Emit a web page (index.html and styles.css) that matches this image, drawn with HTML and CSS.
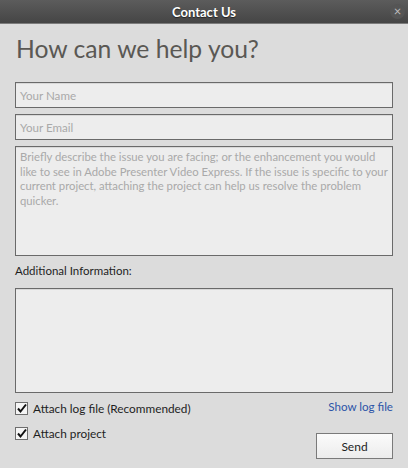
FILE: index.html
```html
<!DOCTYPE html>
<html>
<head>
<meta charset="utf-8">
<link rel="stylesheet" href="styles.css">
</head>
<body>
<div class="dialog">
  <div class="titlebar">
    <span class="title">Contact Us</span>
    <span class="close">×</span>
  </div>
  <div class="content">
    <h1 class="heading">How can we help you?</h1>
    <div class="field field-line"><span class="ph">Your Name</span></div>
    <div class="field field-line"><span class="ph">Your Email</span></div>
    <div class="field field-area"><span class="ph">Briefly describe the issue you are facing; or the enhancement you would like to see in Adobe Presenter Video Express. If the issue is specific to your current project, attaching the project can help us resolve the problem quicker.</span></div>
    <div class="label">Additional Information:</div>
    <div class="field field-area2"></div>
    <div class="bottom">
      <div class="checks">
        <label class="check">
          <svg class="box" width="13" height="13" viewBox="0 0 13 13"><rect x="0.5" y="0.5" width="12" height="12" fill="#f5f5f5" stroke="#6e6e6e"/><path d="M3 6.5 L5.5 9.5 L11 2.5" fill="none" stroke="#111" stroke-width="2"/></svg>
          <span>Attach log file (Recommended)</span>
        </label>
        <label class="check">
          <svg class="box" width="13" height="13" viewBox="0 0 13 13"><rect x="0.5" y="0.5" width="12" height="12" fill="#f5f5f5" stroke="#6e6e6e"/><path d="M3 6.5 L5.5 9.5 L11 2.5" fill="none" stroke="#111" stroke-width="2"/></svg>
          <span>Attach project</span>
        </label>
      </div>
      <div class="actions">
        <span class="link">Show log file</span>
        <button class="send">Send</button>
      </div>
    </div>
  </div>
</div>
</body>
</html>
```
FILE: styles.css
```css
html, body {
  margin: 0;
  padding: 0;
  background: #dcdcdc;
  font-family: Lato, "Liberation Sans", sans-serif;
}
.dialog {
  width: 408px;
  height: 468px;
  overflow: hidden;
}
.titlebar {
  height: 23px;
  border-bottom: 1px solid #7c7c7c;
  background: linear-gradient(#5c5c5c, #454545);
  display: flex;
  align-items: center;
  justify-content: center;
  position: relative;
}
.title {
  color: #fff;
  font-weight: bold;
  font-size: 13px;
  text-shadow: 0 1px 1px #222;
}
.close {
  position: absolute;
  right: 3px;
  top: 4px;
  width: 15px;
  height: 15px;
  border-radius: 50%;
  background: #555;
  color: #bdbdbd;
  font-size: 13px;
  line-height: 14px;
  text-align: center;
}
.content {
  padding: 0 15px;
}
.heading {
  margin: 9px 0 17px 1px;
  font-weight: normal;
  font-size: 24.7px;
  line-height: 32px;
  color: #5a5854;
}
.field {
  box-sizing: border-box;
  width: 378px;
  background: #ededed;
  border: 1px solid #6a6a6a;
  box-shadow: inset 0 1px 0 #d8d8d8;
  font-size: 11.6px;
  color: #a9a9a9;
}
.field-line {
  height: 26px;
  display: flex;
  align-items: center;
  padding-left: 4px;
  margin-bottom: 6px;
}
.field-area {
  height: 110px;
  padding: 3px 1px 3px 4px;
  font-size: 11.3px;
  line-height: 14.5px;
}
.label {
  font-size: 11.5px;
  color: #1e1e1e;
  line-height: 16px;
  margin: 7px 0 9px;
}
.field-area2 {
  height: 105px;
}
.bottom {
  display: flex;
  justify-content: space-between;
}
.checks {
  display: flex;
  flex-direction: column;
  gap: 10px;
  padding-top: 8px;
}
.check {
  display: flex;
  align-items: center;
  gap: 5px;
  font-size: 11.8px;
  color: #1e1e1e;
  line-height: 15px;
}
.box {
  display: block;
  flex: none;
}
.actions {
  display: flex;
  flex-direction: column;
  align-items: flex-end;
  padding-top: 6px;
}
.link {
  font-size: 11.6px;
  color: #2d55a8;
  line-height: 16px;
}
.send {
  margin-top: 18px;
  width: 77px;
  height: 26px;
  border: 1px solid #7a7a7a;
  background: linear-gradient(#fbfbfb, #ececec);
  font-family: Lato, "Liberation Sans", sans-serif;
  font-size: 12px;
  color: #1e1e1e;
  padding: 0;
}
```
